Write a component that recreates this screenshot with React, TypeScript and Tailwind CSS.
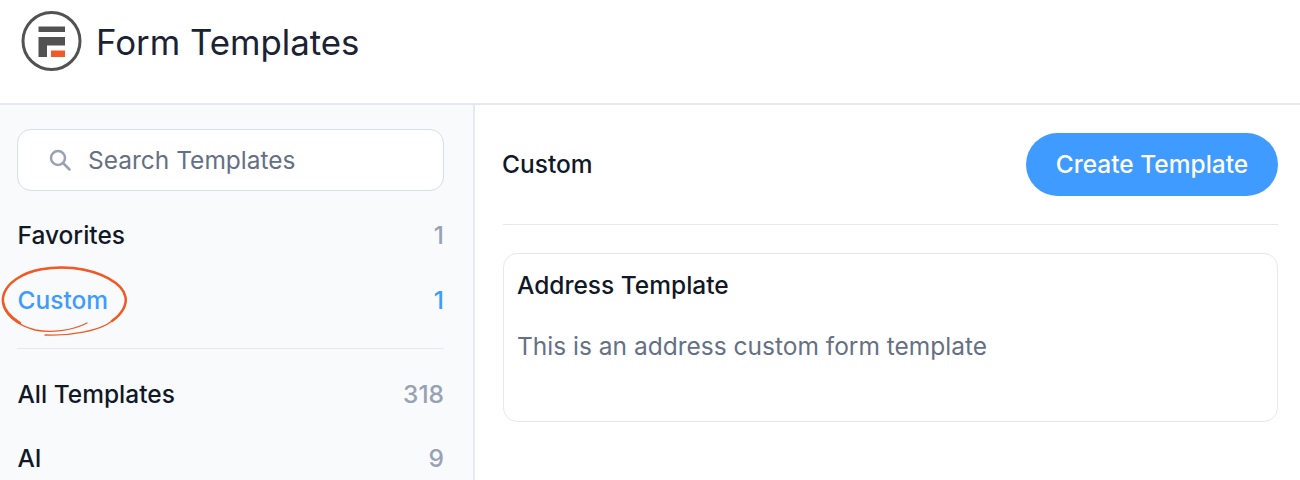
function Logo() {
  return (
    <svg width="62" height="62" viewBox="0 0 62 62" fill="none">
      <circle cx="31.500" cy="31" r="28.500" stroke="#525252" strokeWidth="3" />
      <path d="M18.500 16.500H45V22H18.500Z" fill="#525252" />
      <path d="M18.500 27H45V35.500H27V47H18.500Z" fill="#525252" />
      <path d="M31 40.500H45V47H31Z" fill="#f15a24" />
    </svg>
  );
}

function SearchIcon() {
  return (
    <svg width="24" height="24" viewBox="0 0 24 24" fill="none" stroke="#98a2b3" strokeWidth="2.500" strokeLinecap="round">
      <circle cx="10" cy="10" r="7" />
      <path d="M15.500 15.500L21.500 21.500" />
    </svg>
  );
}

function Scribble() {
  return (
    <svg className="absolute left-0 top-[265px]" width="130" height="74" viewBox="0 0 130 74" fill="none">
      <path
        d="M45 70C70 71 100 66 112 56C122 49 127 40 125.500 32C123 18 100 6 73 3C50 1 30 5 18 13C8 19 2 28 3 37C4 50 17 60 35 65C50 68 72 66 87 58"
        stroke="#f15a24"
        strokeWidth="1.300"
        strokeLinecap="round"
      />
      <path
        d="M112 56C122 49 127 40 125.500 32C123 18 100 6 73 3C50 1 30 5 18 13C8 19 2 28 3 37C4 45 10 52 20 58"
        stroke="#f15a24"
        strokeWidth="2.500"
        strokeLinecap="round"
      />
    </svg>
  );
}

function CategoryRow({
  label,
  count,
  active,
  className,
}: {
  label: string;
  count: number;
  active?: boolean;
  className?: string;
}) {
  return (
    <div className={`flex items-center justify-between pl-[0.5px] text-[24.500px] leading-[32px] ${className ?? ""}`}>
      <span className={`font-medium ${active ? "text-[#3f9bff]" : "text-[#111827]"}`}>{label}</span>
      <span className={`font-medium ${active ? "text-[#3f9bff]" : "text-[#98a2b3]"}`}>{count}</span>
    </div>
  );
}

export default function App() {
  return (
    <div className="relative flex h-[480px] w-[1300px] flex-col overflow-hidden bg-white font-['Inter',sans-serif]">
      <header className="flex h-[105px] shrink-0 items-start gap-[14px] border-b-2 border-[#e5e8f0] pl-[20px] pt-[10px]">
        <Logo />
        <h1 className="pt-[10px] text-[34.800px] leading-[44px] text-[#1a2233]">Form Templates</h1>
      </header>
      <div className="flex min-h-0 flex-1">
        <aside className="w-[475px] shrink-0 border-r-2 border-[#e5e8f0] bg-[#f9fafc] pl-[17px] pr-[29px] pt-[24px]">
          <div className="flex h-[62px] items-center gap-[16px] rounded-[14px] border border-[#d9dee8] bg-white pl-[30px]">
            <SearchIcon />
            <span className="text-[24.500px] text-[#667085]">Search Templates</span>
          </div>
          <CategoryRow label="Favorites" count={1} className="mt-[28px]" />
          <CategoryRow label="Custom" count={1} active className="mt-[33px]" />
          <div className="mt-[32px] h-px bg-[#e5e8f0]" />
          <CategoryRow label="All Templates" count={318} className="mt-[29px]" />
          <CategoryRow label="AI" count={9} className="mt-[32px]" />
        </aside>
        <main className="flex-1 pl-[28px] pr-[22px] pt-[28px]">
          <div className="flex h-[63px] items-center justify-between">
            <span className="-ml-px text-[24.500px] font-medium text-[#111827]">Custom</span>
            <button className="flex h-[63px] w-[252px] items-center justify-center rounded-full bg-[#3f9bff] text-[24.500px] font-medium text-white">
              Create Template
            </button>
          </div>
          <div className="mt-[28px] h-px bg-[#e5e8f0]" />
          <div className="mt-[28px] h-[169px] rounded-[14px] border border-[#e5e8f0] bg-white px-[13px] pt-[15px]">
            <div className="text-[24.500px] font-medium leading-[32px] text-[#111827]">Address Template</div>
            <div className="mt-[29px] text-[24.500px] leading-[32px] text-[#667085]">This is an address custom form template</div>
          </div>
        </main>
      </div>
      <Scribble />
    </div>
  );
}
